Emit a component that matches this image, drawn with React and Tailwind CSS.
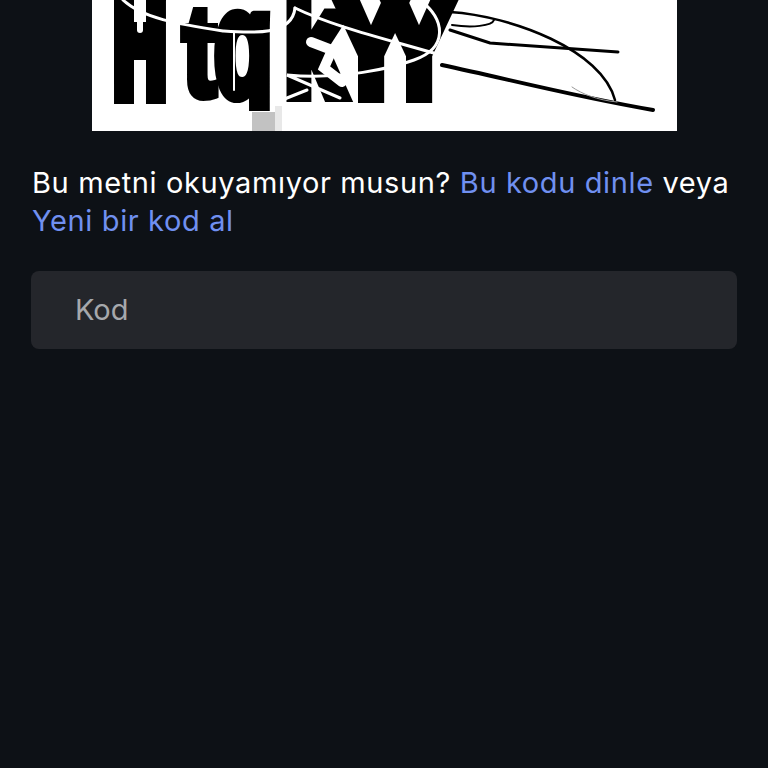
import React from "react";

const CaptchaImage = () => (
  <svg viewBox="0 0 585 131" className="block w-[585px] h-[131px] bg-white">
    <g fontFamily="Liberation Sans" fontWeight="700" fill="#000" stroke="#000">
      <text transform="translate(22 94) scale(0.48 1)" fontSize="150" strokeWidth="20">H</text>
      <text transform="translate(90 96) scale(0.8 1)" fontSize="130" strokeWidth="8">t</text>
      <text transform="translate(122 96) scale(0.64 1)" fontSize="150" strokeWidth="12">q</text>
      <text transform="translate(192 95) scale(0.72 1)" fontSize="150" strokeWidth="14">k</text>
      <text transform="translate(240 97) scale(0.78 1)" fontSize="150" strokeWidth="12">Y</text>
      <text transform="translate(288 97) scale(0.78 1)" fontSize="150" strokeWidth="12">Y</text>
    </g>
    <rect x="100" y="111" width="95" height="20" fill="#fff" />
    <rect x="160" y="112" width="23" height="19" fill="#c2c2c2" />
    <rect x="183" y="106" width="7" height="25" fill="#e8e8e8" />
    {/* white scratches over the letters */}
    <g fill="none" stroke="#fff" strokeLinecap="round">
      <path d="M31 0C50 18 85 24 131 31C160 33 200 36 203 8" strokeWidth="3" />
      <path d="M203 8C240 26 290 38 345 54" strokeWidth="3" />
      <path d="M328 0C354 20 356 48 322 60C300 68 250 80 195 75L248 98" strokeWidth="3" />
      <path d="M142 32V90" strokeWidth="2" />
      <path d="M48 0V30" strokeWidth="6" />
      <path d="M219 42L240 50L232 68L250 82" strokeWidth="10" />
      <path d="M190 100L215 90" strokeWidth="3" />
    </g>
    {/* black lines */}
    <g fill="none" stroke="#000" strokeLinecap="round">
      <path d="M358 12C420 16 510 50 523 100" strokeWidth="2.5" />
      <path d="M358 30L398 43L526 52" strokeWidth="3" />
      <path d="M360 25C380 28 400 26 402 20" strokeWidth="2" />
      <path d="M350 65C420 80 480 96 561 110" strokeWidth="4" />
      <path d="M480 87C490 94 505 100 525 102" strokeWidth="1" stroke="#999" />
    </g>
  </svg>
);

export default function App() {
  return (
    <div className="min-h-[768px] bg-[#0d1116] font-['Inter',sans-serif] overflow-hidden">
      <div className="flex justify-center pl-px">
        <CaptchaImage />
      </div>
      <div className="pl-8 pr-8 pt-[33px]">
        <p className="text-[29px] leading-[38px] tracking-[0.62px] text-white">
          Bu metni okuyamıyor musun? <span className="text-[#7090f0]">Bu kodu dinle</span> veya{" "}
          <span className="text-[#7090f0]">Yeni bir kod al</span>
        </p>
      </div>
      <div className="mx-[31px] mt-[31px] h-[78px] rounded-lg bg-[#24262b] flex items-center pl-11">
        <span className="text-[29px] text-[#a6a8ac]">Kod</span>
      </div>
    </div>
  );
}
